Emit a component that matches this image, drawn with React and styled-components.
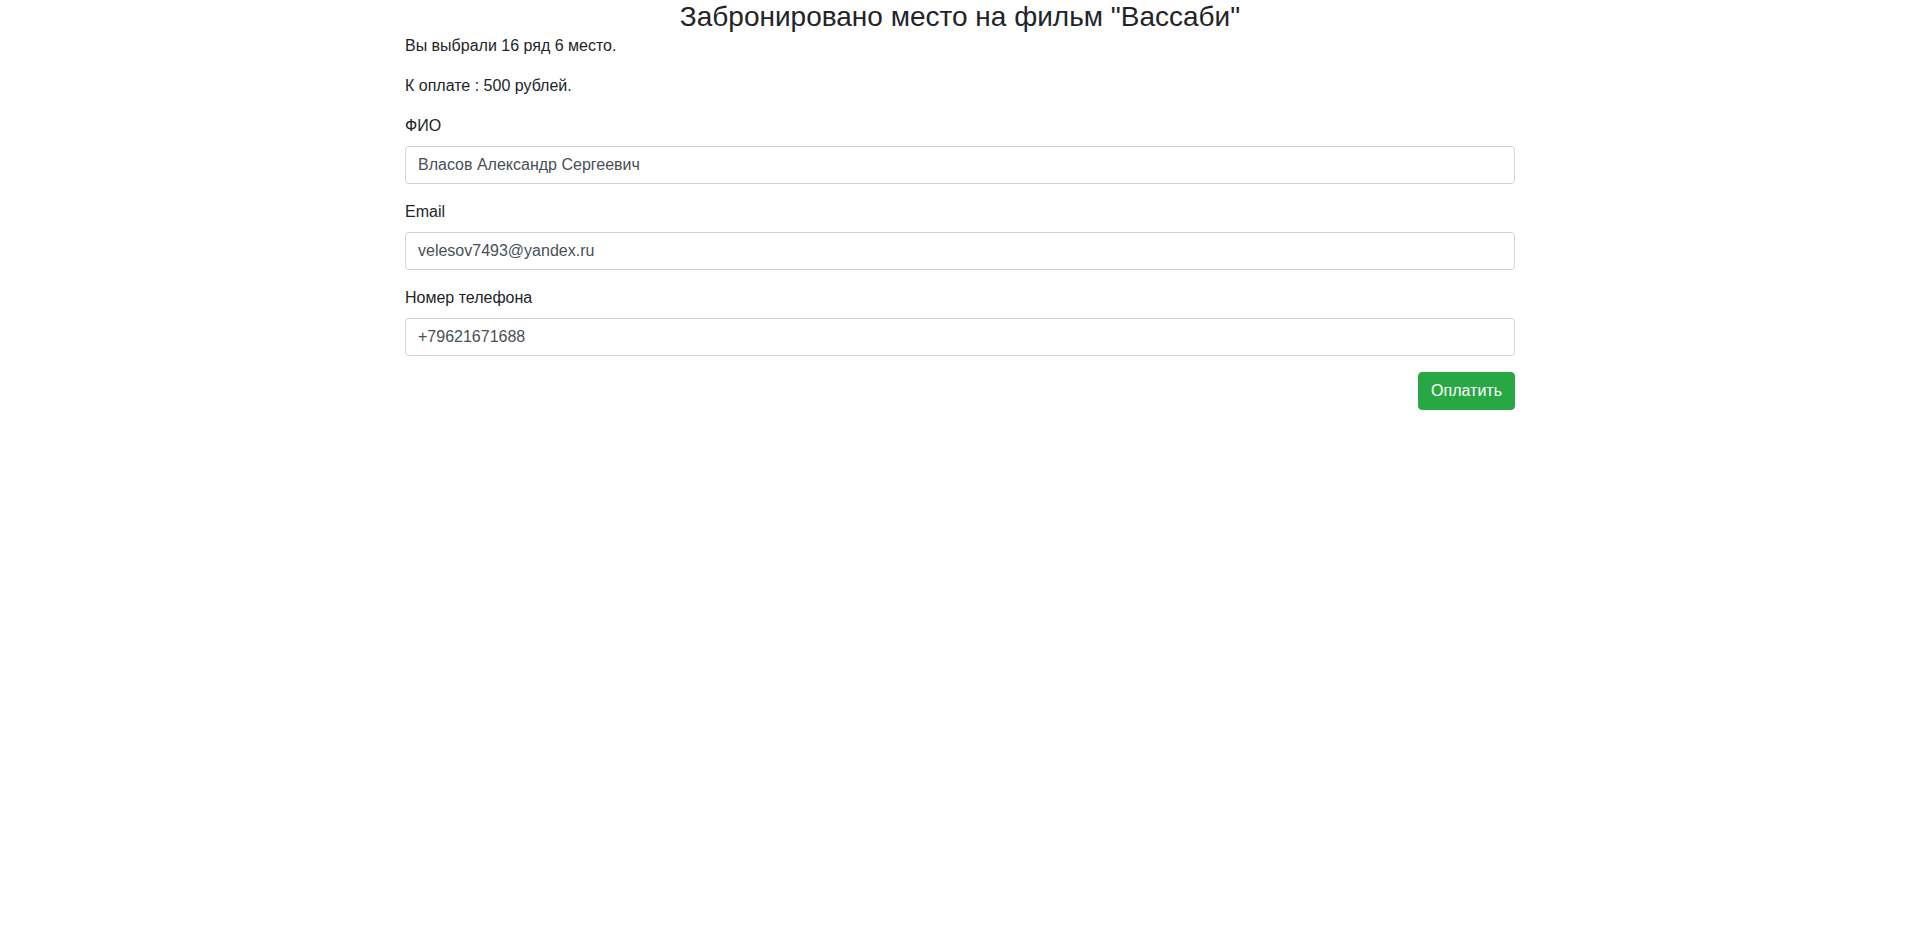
import React, { useState } from 'react';
import styled, { createGlobalStyle } from 'styled-components';

const GlobalStyle = createGlobalStyle`
  *, *::before, *::after {
    box-sizing: border-box;
  }
  body {
    margin: 0;
    font-family: "Liberation Sans", Arial, sans-serif;
    font-size: 16px;
    line-height: 1.5;
    color: #212529;
    background: #fff;
  }
`;

const Container = styled.div`
  width: 100%;
  max-width: 1140px;
  padding: 0 15px;
  margin: 0 auto;
`;

const Title = styled.h3`
  margin: 0;
  font-size: 28px;
  font-weight: 500;
  line-height: 1.2;
  text-align: center;
`;

const Text = styled.p`
  margin: 0 0 16px;
`;

const FormGroup = styled.div`
  margin-bottom: 16px;
`;

const Label = styled.label`
  display: inline-block;
  margin-bottom: 8px;
`;

const Input = styled.input`
  display: block;
  width: 100%;
  height: 38px;
  padding: 6px 12px;
  font-family: inherit;
  font-size: 16px;
  line-height: 1.5;
  color: #495057;
  background: #fff;
  border: 1px solid #ced4da;
  border-radius: 4px;
  outline: none;
`;

const Actions = styled.div`
  display: flex;
  justify-content: flex-end;
`;

const PayButton = styled.button`
  height: 38px;
  padding: 6px 12px;
  font-family: inherit;
  font-size: 16px;
  line-height: 1.5;
  color: #fff;
  background: #28a745;
  border: 1px solid #28a745;
  border-radius: 4px;
  cursor: pointer;
`;

const fields = [
  { id: 'fio', label: 'ФИО', value: 'Власов Александр Сергеевич' },
  { id: 'email', label: 'Email', value: 'velesov7493@yandex.ru' },
  { id: 'phone', label: 'Номер телефона', value: '+79621671688' },
];

function App() {
  const [form, setForm] = useState(
    Object.fromEntries(fields.map((f) => [f.id, f.value]))
  );

  const handleChange = (e) => setForm({ ...form, [e.target.id]: e.target.value });

  return (
    <>
      <GlobalStyle />
      <Container>
        <Title>Забронировано место на фильм "Вассаби"</Title>
        <Text>Вы выбрали 16 ряд 6 место.</Text>
        <Text>К оплате : 500 рублей.</Text>
        <form onSubmit={(e) => e.preventDefault()}>
          {fields.map((f) => (
            <FormGroup key={f.id}>
              <Label htmlFor={f.id}>{f.label}</Label>
              <Input id={f.id} value={form[f.id]} onChange={handleChange} />
            </FormGroup>
          ))}
          <Actions>
            <PayButton type="submit">Оплатить</PayButton>
          </Actions>
        </form>
      </Container>
    </>
  );
}

export default App;
